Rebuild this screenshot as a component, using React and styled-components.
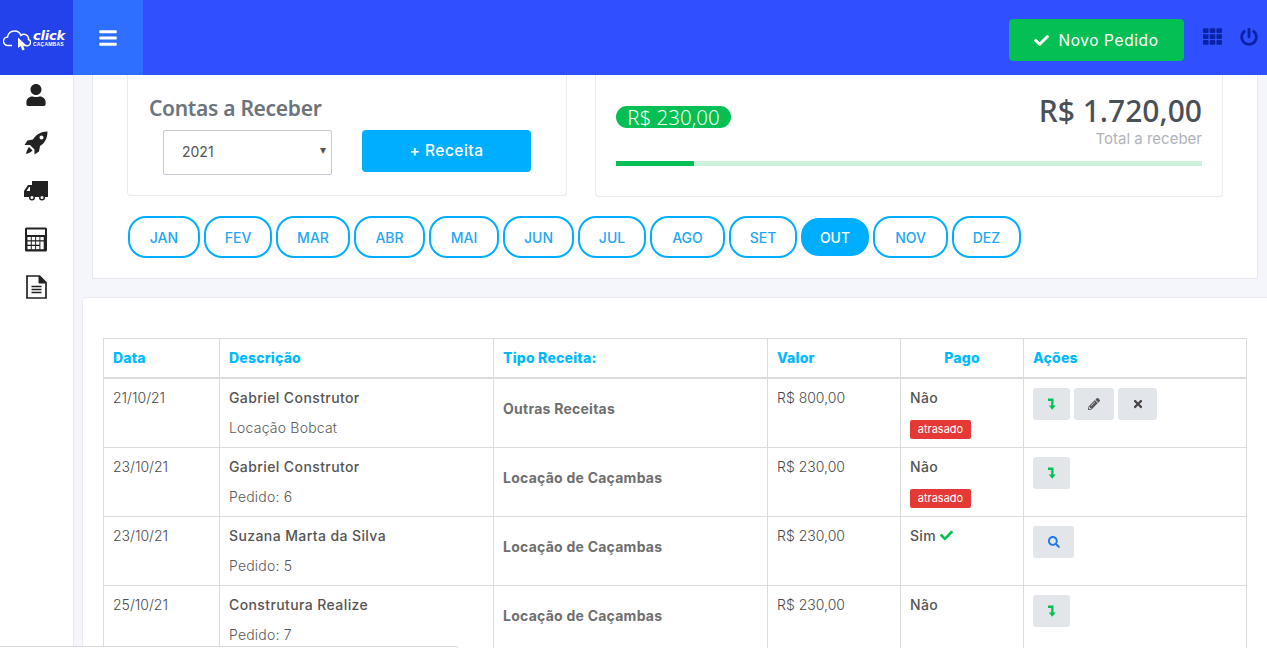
import React from 'react'
import styled, { createGlobalStyle } from 'styled-components'
import { FaUser, FaCheck, FaTh, FaPowerOff, FaBars, FaPencilAlt, FaTimes, FaSearch } from 'react-icons/fa'

const GlobalStyle = createGlobalStyle`
html,body{margin:0;padding:0;height:100%;}
body{font-family:Inter,"Noto Sans",sans-serif;color:#555;background:#f4f6fb;}
*{box-sizing:border-box;}
`
const Page = styled.div`
height:648px;
overflow:hidden;
position:relative;
display:flex;
flex-direction:column;
`
const Header = styled.header`
height:75px;
flex:none;
display:flex;
align-items:center;
background:#3050ff;
`
const Brand = styled.div`
width:73px;
height:100%;
background:#2442ec;
display:flex;
align-items:center;
padding-left:3px;
padding-top:4px;
color:#fff;
`
const BrandText = styled.div`
display:flex;
flex-direction:column;
margin-left:2px;
margin-bottom:3px;
`
const BrandName = styled.span`
font-family:"DejaVu Sans",sans-serif;
font-size:13px;
line-height:12px;
font-weight:700;
font-style:italic;
letter-spacing:-0.2px;
`
const BrandSub = styled.span`
font-family:"Liberation Sans",sans-serif;
font-size:5px;
line-height:5px;
font-weight:700;
letter-spacing:0.2px;
`
const Toggler = styled.div`
width:70px;
height:100%;
background:#2f6fff;
color:#fff;
display:flex;
align-items:center;
justify-content:center;
font-size:20px;
`
const HeaderRight = styled.div`
margin-left:auto;
display:flex;
align-items:center;
padding-right:9px;
`
const NewOrder = styled.button`
width:175px;
height:42px;
margin-top:5px;
border:none;
border-radius:4px;
background:#04bf53;
color:#fff;
font-family:inherit;
font-size:15.5px;
font-weight:400;
letter-spacing:.6px;
display:flex;
align-items:center;
justify-content:center;
gap:9px;
margin-right:19px;
`
const HeaderIcon = styled.span`
display:flex;
color:#0a22a8;
font-size:${p => p.$size}px;
margin-right:${p => p.$gap}px;
margin-bottom:2px;
`
const Body = styled.div`
flex:1;
display:flex;
min-height:0;
`
const Sidebar = styled.nav`
width:74px;
flex:none;
background:#fff;
border-right:1px solid #e6e8ee;
display:flex;
flex-direction:column;
gap:8px;
`
const SideItem = styled.div`
height:40px;
padding-right:1px;
display:flex;
align-items:center;
justify-content:center;
color:#222;
font-size:22px;
`
const Main = styled.main`
flex:1;
min-width:0;
padding-left:8px;
`
const TopPanel = styled.section`
margin-left:10px;
width:1166px;
height:204px;
background:#fff;
border:1px solid #e6e8ee;
border-top:none;
padding-left:34px;
`
const Cards = styled.div`
display:flex;
align-items:flex-start;
gap:28px;
height:121px;
`
const Card = styled.div`
width:${p => p.$w}px;
height:${p => p.$h}px;
border:1px solid #eaecf0;
border-top:none;
border-radius:0 0 4px 4px;
`
const FilterCard = styled(Card)`
padding:18px 0 0 21px;
`
const Title = styled.h2`
margin:0 0 7px;
font-family:"Noto Sans",sans-serif;
font-size:21px;
line-height:30px;
font-weight:600;
color:#6c757d;
letter-spacing:-.3px;
`
const FilterRow = styled.div`
display:flex;
align-items:flex-start;
padding-left:14px;
`
const SelectWrap = styled.div`
position:relative;
width:169px;
height:45px;
margin-right:30px;
&::after{
  content:"▾";
  position:absolute;
  right:6px;
  top:12px;
  font-size:12px;
  color:#555;
}
`
const YearSelect = styled.select`
appearance:none;
width:100%;
height:100%;
background:#fff;
border:1px solid #c5cad3;
border-radius:2px;
padding:0 0 2px 18px;
font-family:inherit;
font-size:14px;
color:#555;
`
const AddButton = styled.button`
width:169px;
height:42px;
padding:0 0 2px;
border:none;
border-radius:4px;
background:#00aeff;
color:#fff;
font-family:inherit;
font-size:15.5px;
font-weight:500;
letter-spacing:.5px;
`
const TotalCard = styled(Card)`
padding:0 20px;
`
const TotalRow = styled.div`
display:flex;
justify-content:space-between;
align-items:flex-start;
`
const Badge = styled.span`
margin-top:31px;
width:115px;
height:22px;
border-radius:11px;
background:#04bf53;
color:#f6fff2;
font-family:"Noto Sans",sans-serif;
font-size:20.5px;
font-weight:300;
line-height:22px;
text-align:center;
white-space:nowrap;
`
const TotalBox = styled.div`
padding-top:16px;
text-align:right;
`
const Amount = styled.div`
font-family:"Noto Sans",sans-serif;
font-size:30px;
line-height:40px;
font-weight:500;
color:#4a5058;
`
const AmountLabel = styled.div`
font-size:15px;
line-height:18px;
margin-top:-1px;
color:#b0b4ba;
`
const Track = styled.div`
height:5px;
margin-top:13px;
background:#cdf0db;
`
const Fill = styled.div`
height:100%;
background:#04bf53;
`
const Months = styled.div`
display:flex;
gap:4px;
margin-top:20px;
padding-left:1px;
`
const Month = styled.div`
width:${p => p.$w}px;
height:42px;
border-radius:18px;
border:2px solid #00aeff;
background:${p => (p.$active ? '#00aeff' : '#fff')};
color:${p => (p.$active ? '#fff' : '#1ea7f5')};
font-size:14px;
font-weight:500;
display:flex;
align-items:center;
justify-content:center;
${p => p.$active && 'height:38px;margin-top:2px;'}
`
const TableCard = styled.section`
margin-top:18px;
width:1300px;
height:400px;
background:#fff;
border:1px solid #eaecf0;
border-radius:4px 0 0 0;
padding:40px 0 0 20px;
`
const Table = styled.table`
width:1143px;
table-layout:fixed;
border-collapse:collapse;
font-size:14px;
`
const Th = styled.th`
height:39px;
padding:0 9px;
border:1px solid #dcdcdc;
border-bottom:2px solid #dcdcdc;
color:#00b9ff;
font-weight:800;
font-size:14px;
letter-spacing:.2px;
text-align:${p => (p.$center ? 'center' : 'left')};
`
const Td = styled.td`
padding:9px 9px 9px;
border:1px solid #dcdcdc;
vertical-align:top;
line-height:20px;
font-weight:300;
color:#4a4a4a;
`
const TypeTd = styled(Td)`
vertical-align:middle;
padding-bottom:17px;
font-size:14px;
font-weight:700;
letter-spacing:.25px;
color:#6f6f6f;
`
const Name = styled.div`
font-weight:500;
letter-spacing:.4px;
color:#555;
margin-bottom:10px;
`
const Sub = styled.div`
letter-spacing:.2px;
color:#5a5a5a;
`
const PaidText = styled.span`
font-weight:500;
letter-spacing:.3px;
color:#555;
`
const Late = styled.span`
display:block;
width:61px;
height:19px;
margin:12px 0 -1px;
border-radius:2px;
background:#e53935;
color:#fff;
font-size:11px;
font-weight:400;
line-height:19px;
text-align:center;
`
const Actions = styled.div`
display:flex;
gap:4px;
`
const ActionButton = styled.div`
width:${p => p.$w}px;
height:32px;
border-radius:3px;
background:#e2e6ea;
color:${p => p.$color};
font-size:12px;
display:flex;
align-items:center;
justify-content:center;
`
const Paid = styled(FaCheck)`
color:#04bf53;
font-size:13px;
margin-left:4px;
vertical-align:-1px;
`
const FooterLine = styled.div`
position:absolute;
left:0;
bottom:0;
width:458px;
height:2px;
background:#fff;
border-top:1px solid #d8d8d8;
border-right:1px solid #d8d8d8;
border-radius:0 4px 0 0;
`

const Rocket = () => (
  <svg width="24" height="24" viewBox="0 0 24 24" fill="currentColor">
    <path fillRule="evenodd" d="M23.500 .5C17 .5 12 3.500 9 8.500L3.500 9.500 .5 14H6L10.500 18.500V23.500L15 20.500 16 15C21 12 23.500 7 23.500 .5ZM17.500 4.500a2 2 0 1 1 0 4 2 2 0 0 1 0-4Z" />
    <path d="M5 16l3.500 3.500C7 21.500 4 22.500 2 23c.5-2.500 1.500-5.500 3-7Z" />
  </svg>
)

const Truck = () => (
  <svg width="24" height="20" viewBox="0 0 24 20" fill="currentColor">
    <path fillRule="evenodd" d="M8 0H24V16H21a3.200 3.200 0 0 0-6 0H11a3.200 3.200 0 0 0-6 0H0V10L4 4H8ZM2.500 10H6V6H5Z" />
    <circle cx="8" cy="16.500" r="2.300" fill="#fff" stroke="currentColor" strokeWidth="1.500" />
    <circle cx="18" cy="16.500" r="2.300" fill="#fff" stroke="currentColor" strokeWidth="1.500" />
  </svg>
)

const calcCells = []
for (let r = 0; r < 3; r++) {
  for (let c = 0; c < 4; c++) {
    if (!(c === 3 && r > 0)) calcCells.push([2.500 + c * 4.300, 10 + r * 4.500])
  }
}

const Calculator = () => (
  <svg width="22" height="25" viewBox="0 0 22 25">
    <rect x="0" y=".5" width="22" height="24" rx="1.500" fill="#222" />
    <rect x="2" y="2.500" width="18" height="5.500" fill="#fff" />
    {calcCells.map(([x, y]) => <rect key={`${x}-${y}`} x={x} y={y} width="3.300" height="3.200" fill="#fff" />)}
    <rect x="15.400" y="14.500" width="3.300" height="7.700" fill="#fff" />
  </svg>
)

const FileDoc = () => (
  <svg width="21" height="24" viewBox="0 0 21 24" fill="none" stroke="currentColor">
    <path d="M1 1H13.500L20 7.500V23H1Z" strokeWidth="1.700" />
    <path d="M13 1V8H20Z" fill="currentColor" strokeWidth="1" />
    <path d="M5.500 11.500H15.500M5.500 14.500H15.500M5.500 17.500H15.500" strokeWidth="1.500" />
  </svg>
)

const Pay = () => (
  <svg width="8" height="12" viewBox="0 0 8 12" fill="currentColor">
    <path d="M0 .5H5.500V7.500H7.800L4.200 11.800 .8 7.500H3.200V3H0Z" />
  </svg>
)

const Cloud = () => (
  <svg width="28" height="22" viewBox="0 0 28 22" fill="none">
    <path d="M9 16.500H5a4 4 0 0 1-.5-8.500 6.500 6.500 0 0 1 6.500-6 7 7 0 0 1 7 4.500 4.500 4.500 0 0 1 7.500 4 3.200 3.200 0 0 1-2.500 6h-3" stroke="#fff" strokeWidth="1.500" />
    <path d="M15 8.500V19l2.500-2 2 4.500 2.200-1-2-4.500h3.300Z" fill="#fff" />
  </svg>
)

const months = [
  ['JAN', 72], ['FEV', 68], ['MAR', 74], ['ABR', 71], ['MAI', 70], ['JUN', 71],
  ['JUL', 68], ['AGO', 75], ['SET', 68], ['OUT', 68], ['NOV', 75], ['DEZ', 69],
]

const rows = [
  { date: '21/10/21', name: 'Gabriel Construtor', sub: 'Locação Bobcat', type: 'Outras Receitas', value: 'R$ 800,00', paid: 'Não', late: true, full: true },
  { date: '23/10/21', name: 'Gabriel Construtor', sub: 'Pedido: 6', type: 'Locação de Caçambas', value: 'R$ 230,00', paid: 'Não', late: true },
  { date: '23/10/21', name: 'Suzana Marta da Silva', sub: 'Pedido: 5', type: 'Locação de Caçambas', value: 'R$ 230,00', paid: 'Sim', done: true },
  { date: '25/10/21', name: 'Construtura Realize', sub: 'Pedido: 7', type: 'Locação de Caçambas', value: 'R$ 230,00', paid: 'Não' },
]

const App = () => {
  const received = 230
  const total = 1720
  return (
    <Page>
      <GlobalStyle />
      <Header>
        <Brand>
          <Cloud />
          <BrandText>
            <BrandName>click</BrandName>
            <BrandSub>CAÇAMBAS</BrandSub>
          </BrandText>
        </Brand>
        <Toggler><FaBars /></Toggler>
        <HeaderRight>
          <NewOrder><FaCheck size={15} />Novo Pedido</NewOrder>
          <HeaderIcon $size={19} $gap={18}><FaTh /></HeaderIcon>
          <HeaderIcon $size={18} $gap={0}><FaPowerOff /></HeaderIcon>
        </HeaderRight>
      </Header>
      <Body>
        <Sidebar>
          <SideItem><FaUser /></SideItem>
          <SideItem><Rocket /></SideItem>
          <SideItem><Truck /></SideItem>
          <SideItem><Calculator /></SideItem>
          <SideItem><FileDoc /></SideItem>
        </Sidebar>
        <Main>
          <TopPanel>
            <Cards>
              <FilterCard $w={440} $h={121}>
                <Title>Contas a Receber</Title>
                <FilterRow>
                  <SelectWrap>
                    <YearSelect defaultValue="2021">
                      <option>2021</option>
                      <option>2020</option>
                    </YearSelect>
                  </SelectWrap>
                  <AddButton>+ Receita</AddButton>
                </FilterRow>
              </FilterCard>
              <TotalCard $w={628} $h={122}>
                <TotalRow>
                  <Badge>R$ 230,00</Badge>
                  <TotalBox>
                    <Amount>R$ 1.720,00</Amount>
                    <AmountLabel>Total a receber</AmountLabel>
                  </TotalBox>
                </TotalRow>
                <Track>
                  <Fill style={{ width: `${(received / total) * 100}%` }} />
                </Track>
              </TotalCard>
            </Cards>
            <Months>
              {months.map(([label, w]) => (
                <Month key={label} $w={w} $active={label === 'OUT'}>{label}</Month>
              ))}
            </Months>
          </TopPanel>
          <TableCard>
            <Table>
              <colgroup>
                <col width="116" />
                <col width="274" />
                <col width="274" />
                <col width="133" />
                <col width="123" />
                <col width="223" />
              </colgroup>
              <thead>
                <tr>
                  <Th>Data</Th>
                  <Th>Descrição</Th>
                  <Th>Tipo Receita:</Th>
                  <Th>Valor</Th>
                  <Th $center>Pago</Th>
                  <Th>Ações</Th>
                </tr>
              </thead>
              <tbody>
                {rows.map((r, i) => (
                  <tr key={i}>
                    <Td>{r.date}</Td>
                    <Td>
                      <Name>{r.name}</Name>
                      <Sub>{r.sub}</Sub>
                    </Td>
                    <TypeTd>{r.type}</TypeTd>
                    <Td>{r.value}</Td>
                    <Td>
                      <PaidText>{r.paid}</PaidText>
                      {r.done && <Paid />}
                      {r.late && <Late>atrasado</Late>}
                    </Td>
                    <Td>
                      <Actions>
                        {r.done
                          ? <ActionButton $w={41} $color="#1e78e0"><FaSearch /></ActionButton>
                          : <ActionButton $w={37} $color="#04bf53"><Pay /></ActionButton>}
                        {r.full && <ActionButton $w={40} $color="#555"><FaPencilAlt /></ActionButton>}
                        {r.full && <ActionButton $w={39} $color="#444"><FaTimes /></ActionButton>}
                      </Actions>
                    </Td>
                  </tr>
                ))}
              </tbody>
            </Table>
          </TableCard>
        </Main>
      </Body>
      <FooterLine />
    </Page>
  )
}

export default App
